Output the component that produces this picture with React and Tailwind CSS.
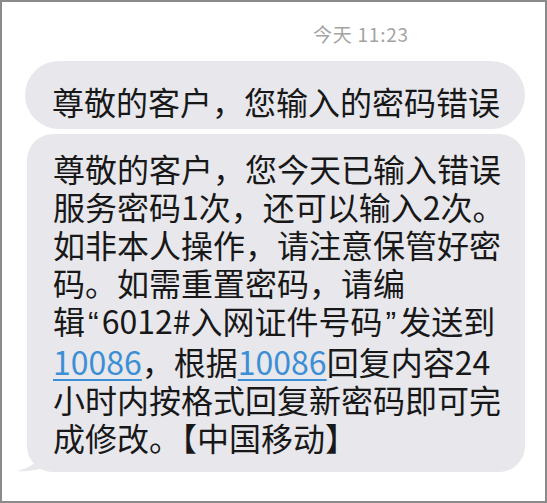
import React from 'react';

const cjk = { fontFamily: '"Noto Sans CJK SC", "Noto Sans", sans-serif' };

function Link({ children }) {
  return (
    <span className="text-[#3c8fd4] underline decoration-[#3c8fd4] decoration-[2px] underline-offset-[4px]">
      {children}
    </span>
  );
}

function Quote({ children }) {
  return <span className="font-['Liberation_Sans'] mx-[3px]">{children}</span>;
}

export default function App() {
  return (
    <div
      className="w-[547px] h-[503px] border-2 border-[#8a8a8a] bg-white overflow-hidden"
      style={cjk}
    >
      <div className="pt-[21px] pl-[311px] text-[19px] leading-[22px] tracking-[0.04em] text-[#a3a3a3]">
        今天 11:23
      </div>

      <div className="mt-[16px] ml-[23px] w-[500px] h-[68px] rounded-full bg-[#e7e7ec] flex items-center pl-[27px] pt-[12px]">
        <span className="text-[32px] leading-[38px] text-[#181818] whitespace-nowrap">
          尊敬的客户，您输入的密码错误
        </span>
      </div>

      <div className="relative mt-[5px] ml-[25px] w-[498px] rounded-[26px] bg-[#e7e7ec] pl-[26px] pt-[15px] pb-[16px]">
        <div className="text-[32px] leading-[38px] text-[#181818] whitespace-nowrap">
          尊敬的客户，您今天已输入错误
          <br />
          服务密码1次，还可以输入2次。
          <br />
          如非本人操作，请注意保管好密
          <br />
          码。如需重置密码，请编
          <br />
          辑<Quote>“</Quote>6012#入网证件号码<Quote>”</Quote>发送到
          <br />
          <Link>10086</Link>，根据<Link>10086</Link>回复内容24
          <br />
          小时内按格式回复新密码即可完
          <br />
          成修改。【中国移动】
        </div>
        <svg
          className="absolute left-[-12px] bottom-0"
          width="34"
          height="22"
          viewBox="0 0 34 22"
        >
          <path d="M26 0 C26 10 18 17 2 21 C14 22 24 20 34 15 L34 0 Z" fill="#e7e7ec" />
        </svg>
      </div>
    </div>
  );
}
